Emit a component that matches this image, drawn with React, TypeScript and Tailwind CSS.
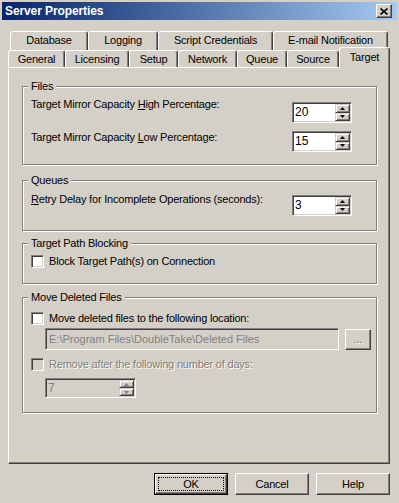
import React from "react";

const raised =
  "border border-t-white border-l-white border-r-[#404040] border-b-[#404040] shadow-[inset_-1px_-1px_0_#808080]";
const sunken =
  "border border-t-[#808080] border-l-[#808080] border-r-white border-b-white shadow-[inset_1px_1px_0_#404040,inset_-1px_-1px_0_#d4d0c8]";
const embossed = "text-[#808080] [text-shadow:1px_1px_0_#ffffff]";

function Arrow({ up, disabled }: { up?: boolean; disabled?: boolean }) {
  const c = disabled ? "#808080" : "#000000";
  return (
    <svg width="5" height="3" viewBox="0 0 5 3" className="block">
      {up ? <polygon points="0,3 2.5,0 5,3" fill={c} /> : <polygon points="0,0 5,0 2.5,3" fill={c} />}
    </svg>
  );
}

function SpinBtn({ up, disabled }: { up?: boolean; disabled?: boolean }) {
  return (
    <div className="flex flex-1 items-center justify-center border border-t-[#d4d0c8] border-l-[#d4d0c8] border-r-[#404040] border-b-[#404040] bg-[#d4d0c8] shadow-[inset_1px_1px_0_#ffffff,inset_-1px_-1px_0_#808080]">
      <Arrow up={up} disabled={disabled} />
    </div>
  );
}

function Spin({ value, wide, disabled }: { value: string; wide?: boolean; disabled?: boolean }) {
  return (
    <div
      className={`flex shrink-0 p-px ${sunken} ${wide ? "h-[20px] w-[91px]" : "h-[21px] w-[60px]"} ${
        disabled ? "bg-[#d4d0c8]" : "bg-white"
      }`}
    >
      <div className={`flex flex-1 items-center pl-[1px] text-[12px] tracking-normal ${disabled ? "text-[#808080]" : "text-black"}`}>
        {value}
      </div>
      <div className="flex w-[15px] flex-col">
        <SpinBtn up disabled={disabled} />
        <SpinBtn disabled={disabled} />
      </div>
    </div>
  );
}

function Checkbox({ disabled }: { disabled?: boolean }) {
  return <div className={`h-[13px] w-[13px] shrink-0 ${sunken} ${disabled ? "bg-[#d4d0c8]" : "bg-white"}`} />;
}

function Tab({ label, cls }: { label: string; cls: string }) {
  return (
    <div
      className={`flex shrink-0 items-center justify-center rounded-t-[3px] border-l border-r border-t border-l-white border-t-white border-r-[#404040] bg-[#d4d0c8] shadow-[inset_-1px_0_0_#808080] ${cls}`}
    >
      {label}
    </div>
  );
}

function Group({ title, cls, children }: { title: string; cls: string; children: React.ReactNode }) {
  return (
    <fieldset
      className={`m-0 w-[355px] shrink-0 border border-[#808080] p-0 shadow-[inset_1px_1px_0_#ffffff,1px_1px_0_#ffffff] ${cls}`}
    >
      <legend className="ml-[5px] bg-[#d4d0c8] px-[3px] leading-[13px]">{title}</legend>
      {children}
    </fieldset>
  );
}

function Button({ label, def }: { label: string; def?: boolean }) {
  if (def) {
    return (
      <div className="flex h-[22px] w-[74px] border border-black">
        <div className={`flex flex-1 p-[2px] ${raised}`}>
          <div className="flex flex-1 items-center justify-center border border-dotted border-black">{label}</div>
        </div>
      </div>
    );
  }
  return <div className={`flex h-[22px] w-[74px] items-center justify-center ${raised}`}>{label}</div>;
}

export default function App() {
  return (
    <div className="h-[503px] w-[399px] overflow-hidden bg-[#d4d0c8] font-['Liberation_Sans',Arial,sans-serif] text-[11px] leading-[13px] tracking-[-0.2px] text-black">
      {/* Title bar */}
      <div className="mx-[2px] mt-[2px] flex h-[18px] items-center justify-between bg-linear-to-r from-[#0a246a] to-[#a6caf0] pl-[3px] pr-[5px]">
        <span className="text-[12px] font-bold tracking-[-0.1px] text-white">Server Properties</span>
        <div className={`flex h-[14px] w-[16px] items-center justify-center bg-[#d4d0c8] ${raised}`}>
          <svg width="8" height="7" viewBox="0 0 8 7" className="block">
            <path d="M0.5 0.5 L7.5 6.5 M7.5 0.5 L0.5 6.5" stroke="#000" strokeWidth="1.6" />
          </svg>
        </div>
      </div>

      {/* Tabs row 1 */}
      <div className="ml-[10px] mt-[11px] flex h-[19px]">
        <Tab label="Database" cls="w-[78px] h-[19px] pb-[1px]" />
        <Tab label="Logging" cls="w-[70px] h-[19px] pb-[1px]" />
        <Tab label="Script Credentials" cls="w-[115px] h-[19px] pb-[1px]" />
        <Tab label="E-mail Notification" cls="w-[115px] h-[19px] pb-[1px]" />
      </div>

      {/* Tabs row 2 */}
      <div className="relative z-10 -mb-px ml-[8px] -mt-[3px] flex h-[21px] items-end">
        <Tab label="General" cls="w-[57px] h-[17px] mb-[1px]" />
        <Tab label="Licensing" cls="w-[64px] h-[17px] mb-[1px]" />
        <Tab label="Setup" cls="w-[49px] h-[17px] mb-[1px]" />
        <Tab label="Network" cls="w-[59px] h-[17px] mb-[1px]" />
        <Tab label="Queue" cls="w-[50px] h-[17px] mb-[1px]" />
        <Tab label="Source" cls="w-[52px] h-[17px] mb-[1px]" />
        <Tab label="Target" cls="w-[51px] h-[21px] pb-[2px]" />
      </div>

      {/* Panel */}
      <div className={`ml-[8px] flex h-[397px] w-[382px] flex-col pl-[13px] pt-[12px] ${raised}`}>
        <Group title="Files" cls="h-[85px]">
          <div className="flex flex-col pl-[8px] pr-[24px] pt-[9px]">
            <div className="flex h-[21px] items-start justify-between">
              <span className="-mt-[4px]">
                Target Mirror Capacity <span className="underline underline-offset-[1px]">H</span>igh Percentage:
              </span>
              <Spin value="20" />
            </div>
            <div className="mt-[8px] flex h-[21px] items-start justify-between">
              <span className="mt-0">
                Target Mirror Capacity <span className="underline underline-offset-[1px]">L</span>ow Percentage:
              </span>
              <Spin value="15" />
            </div>
          </div>
        </Group>

        <Group title="Queues" cls="mt-[9px] h-[57px]">
          <div className="flex pl-[8px] pr-[24px] pt-[8px]">
            <div className="flex h-[21px] flex-1 items-start justify-between">
              <span className="-mt-[2px]">
                <span className="underline underline-offset-[1px]">R</span>etry Delay for Incomplete Operations (seconds):
              </span>
              <Spin value="3" />
            </div>
          </div>
        </Group>

        <Group title="Target Path Blocking" cls="mt-[6px] h-[47px]">
          <div className="flex h-[13px] items-center gap-[5px] pl-[8px] mt-[5px]">
            <Checkbox />
            <span>Block Target Path(s) on Connection</span>
          </div>
        </Group>

        <Group title="Move Deleted Files" cls="mt-[7px] h-[122px]">
          <div className="flex flex-col pl-[8px] pt-[8px]">
            <div className="flex h-[13px] items-center gap-[5px]">
              <Checkbox />
              <span>Move deleted files to the following location:</span>
            </div>
            <div className="ml-[14px] mt-[3px] flex items-start">
              <div className={`flex h-[22px] w-[294px] items-center bg-[#d4d0c8] pl-[3px] text-[11px] tracking-normal text-[#808080] ${sunken}`}>
                E:\Program Files\DoubleTake\Deleted Files
              </div>
              <div className={`ml-[6px] mt-px flex h-[21px] w-[26px] items-end justify-center pb-[3px] ${raised}`}>
                <span className={`${embossed} tracking-normal`}>...</span>
              </div>
            </div>
            <div className="mt-[8px] flex h-[13px] items-center gap-[5px]">
              <Checkbox disabled />
              <span className={embossed}>Remove after the following number of days:</span>
            </div>
            <div className="ml-[14px] mt-[7px] flex">
              <Spin value="7" wide disabled />
            </div>
          </div>
        </Group>
      </div>

      {/* Buttons */}
      <div className="mt-[9px] flex justify-end gap-[7px] pr-[9px]">
        <Button label="OK" def />
        <Button label="Cancel" />
        <Button label="Help" />
      </div>
    </div>
  );
}
